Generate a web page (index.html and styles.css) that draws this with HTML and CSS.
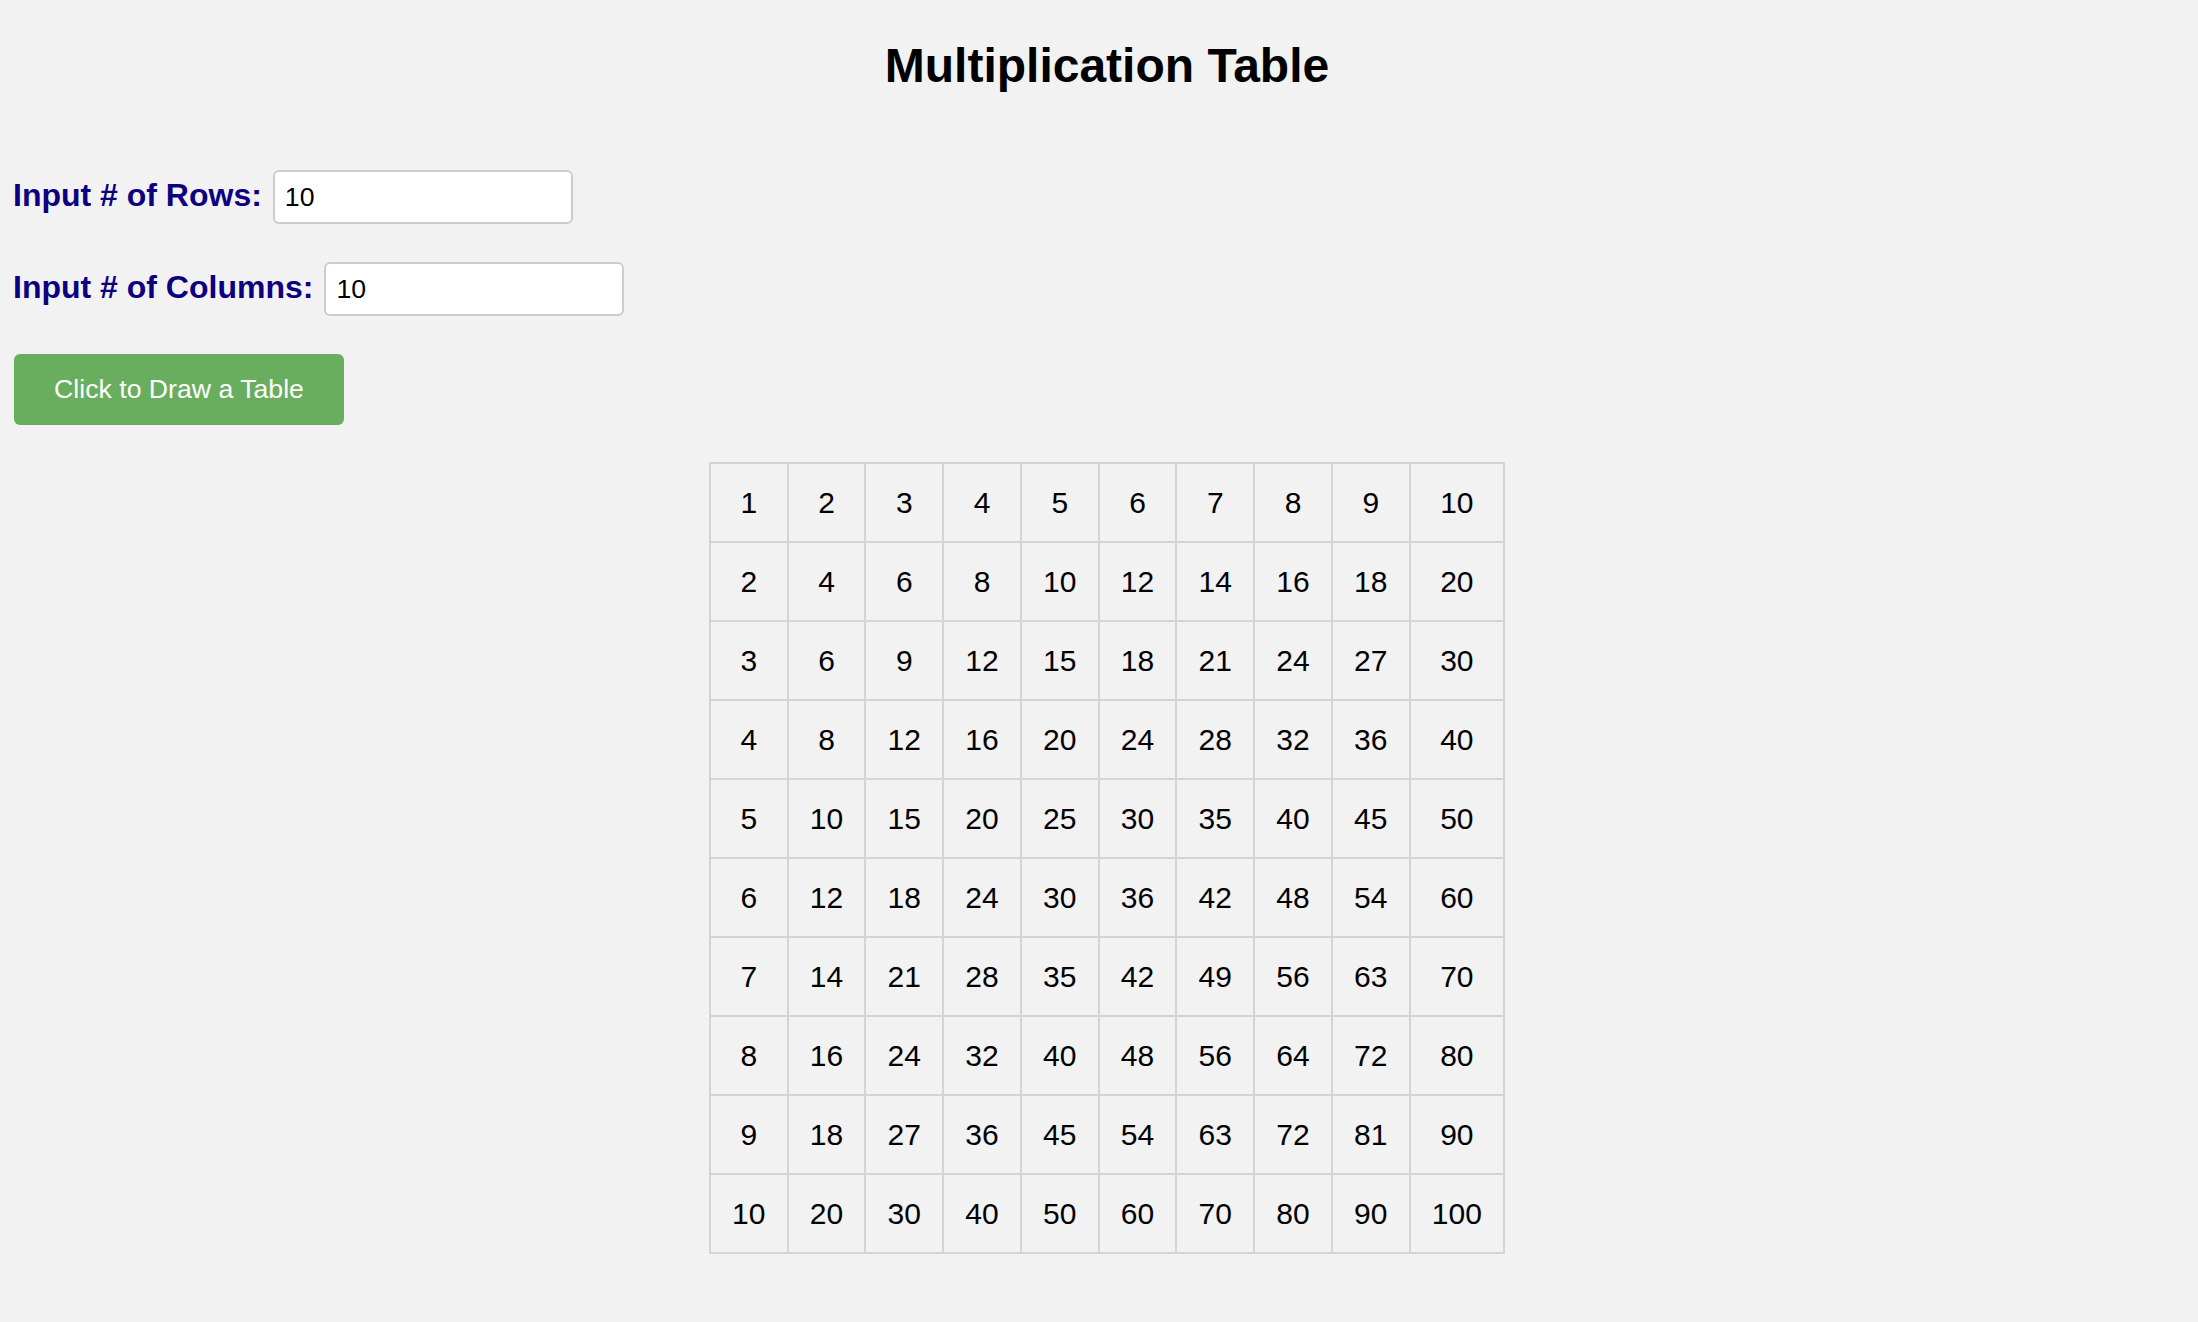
FILE: index.html
```html
<!DOCTYPE html>
<html lang="en">
<head>
<meta charset="utf-8">
<title>Multiplication Table</title>
<link rel="stylesheet" href="styles.css">
</head>
<body>
<h1 class="title">Multiplication Table</h1>
<div class="controls">
  <div class="field">
    <label class="field-label" for="rows">Input # of Rows:</label>
    <input class="field-input" id="rows" type="text" value="10">
  </div>
  <div class="field">
    <label class="field-label" for="cols">Input # of Columns:</label>
    <input class="field-input" id="cols" type="text" value="10">
  </div>
  <button class="draw-btn" type="button">Click to Draw a Table</button>
</div>
<div class="table-wrap">
  <table class="mult-table">
    <tbody>
      <tr><td>1</td><td>2</td><td>3</td><td>4</td><td>5</td><td>6</td><td>7</td><td>8</td><td>9</td><td>10</td></tr>
      <tr><td>2</td><td>4</td><td>6</td><td>8</td><td>10</td><td>12</td><td>14</td><td>16</td><td>18</td><td>20</td></tr>
      <tr><td>3</td><td>6</td><td>9</td><td>12</td><td>15</td><td>18</td><td>21</td><td>24</td><td>27</td><td>30</td></tr>
      <tr><td>4</td><td>8</td><td>12</td><td>16</td><td>20</td><td>24</td><td>28</td><td>32</td><td>36</td><td>40</td></tr>
      <tr><td>5</td><td>10</td><td>15</td><td>20</td><td>25</td><td>30</td><td>35</td><td>40</td><td>45</td><td>50</td></tr>
      <tr><td>6</td><td>12</td><td>18</td><td>24</td><td>30</td><td>36</td><td>42</td><td>48</td><td>54</td><td>60</td></tr>
      <tr><td>7</td><td>14</td><td>21</td><td>28</td><td>35</td><td>42</td><td>49</td><td>56</td><td>63</td><td>70</td></tr>
      <tr><td>8</td><td>16</td><td>24</td><td>32</td><td>40</td><td>48</td><td>56</td><td>64</td><td>72</td><td>80</td></tr>
      <tr><td>9</td><td>18</td><td>27</td><td>36</td><td>45</td><td>54</td><td>63</td><td>72</td><td>81</td><td>90</td></tr>
      <tr><td>10</td><td>20</td><td>30</td><td>40</td><td>50</td><td>60</td><td>70</td><td>80</td><td>90</td><td>100</td></tr>
    </tbody>
  </table>
</div>
</body>
</html>
```
FILE: styles.css
```css
html, body {
  margin: 0;
  padding: 0;
  background: #f2f2f2;
}

body {
  font-family: "Liberation Sans", Arial, sans-serif;
  color: #000;
}

.title {
  margin: 0;
  padding: 38px 0 0 16px;
  font-size: 48px;
  line-height: 55px;
  font-weight: bold;
  text-align: center;
}

.controls {
  display: flex;
  flex-direction: column;
  align-items: flex-start;
  gap: 38px;
  padding: 77px 0 0 13px;
}

.field {
  display: flex;
  align-items: baseline;
  gap: 11px;
}

.field-label {
  font-weight: bold;
  font-size: 32px;
  color: #0d0080;
}

.field-input {
  box-sizing: border-box;
  width: 300px;
  height: 54px;
  border: 2px solid #cdcdcd;
  border-radius: 6px;
  background: #fff;
  padding: 0 10px;
  font-family: "Liberation Sans", Arial, sans-serif;
  font-size: 26.67px;
  color: #000;
  outline: none;
}

.draw-btn {
  box-sizing: border-box;
  width: 330px;
  height: 71px;
  margin-left: 1px;
  border: none;
  border-radius: 6px;
  background: #68ae5e;
  color: #fff;
  font-family: "Liberation Sans", Arial, sans-serif;
  font-size: 26.67px;
  padding: 0;
}

.table-wrap {
  padding: 37px 0 40px 16px;
  display: flex;
  justify-content: center;
}

.mult-table {
  border-collapse: collapse;
}

.mult-table td {
  border: 2px solid #d4d4d4;
  padding: 21px 21.2px;
  font-size: 30px;
  line-height: 35px;
  text-align: center;
}
```
